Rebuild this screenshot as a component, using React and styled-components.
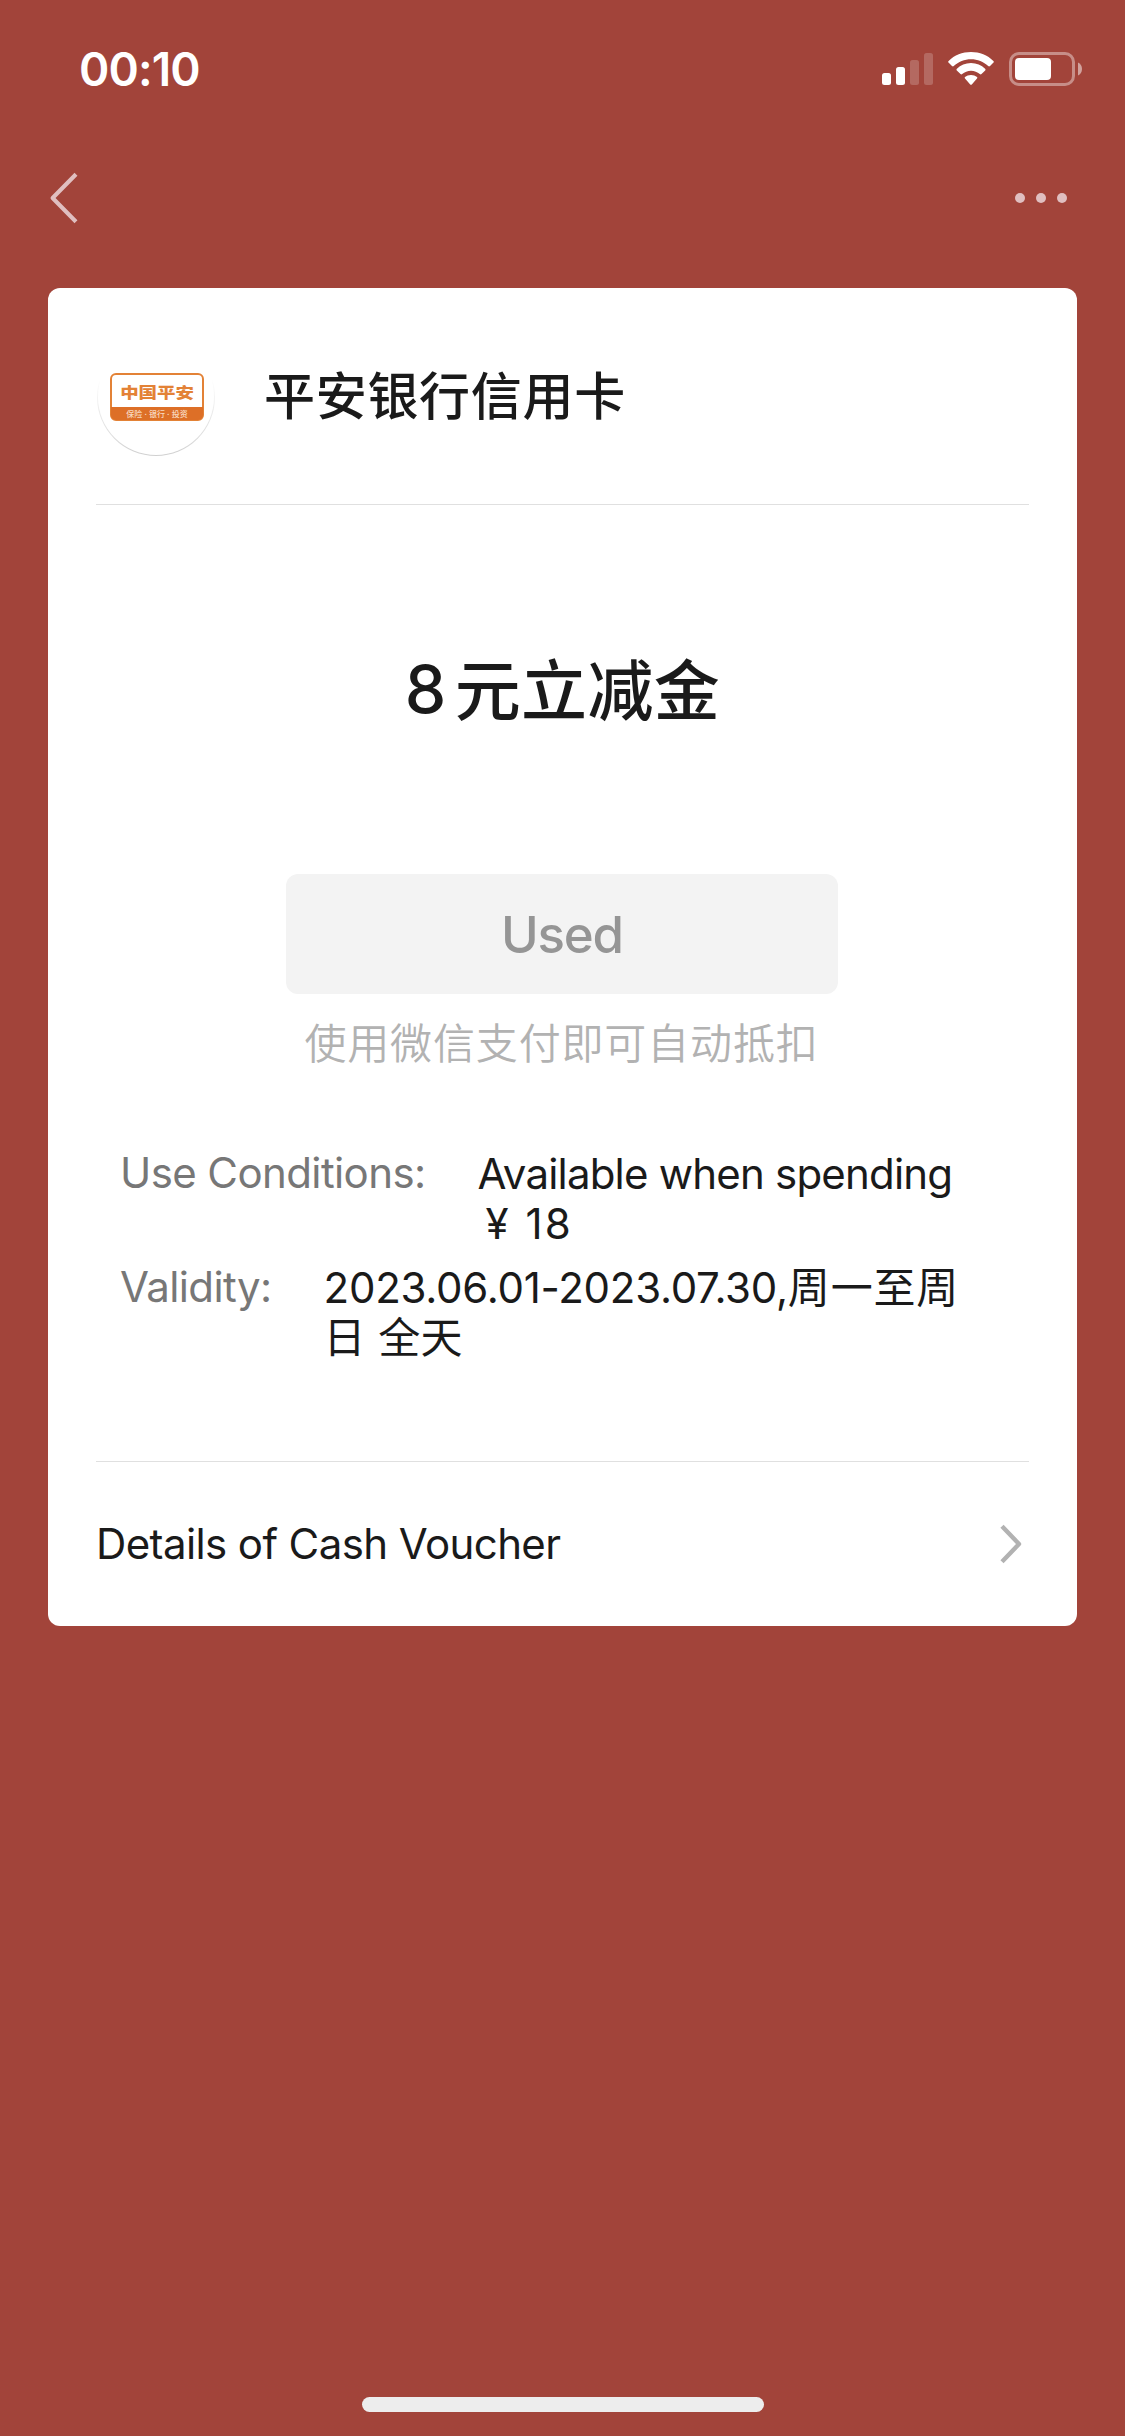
import React from 'react';
import styled, { createGlobalStyle } from 'styled-components';

const GlobalStyle = createGlobalStyle`
  * {
    box-sizing: border-box;
  }

  body {
    margin: 0;
    background-color: #a2443a;
    font-family: Inter, 'Noto Sans CJK SC', sans-serif;
    color: #1a1a1a;
  }
`;

const Page = styled.div`
  width: 1125px;
  height: 2436px;
  display: flex;
  flex-direction: column;
  background-color: #a2443a;
`;

const StatusBar = styled.header`
  height: 138px;
  padding: 0 42px 0 79px;
  display: flex;
  justify-content: space-between;
  align-items: center;
`;

const Time = styled.span`
  color: white;
  font-size: 46px;
  font-weight: 600;
  line-height: 60px;
  letter-spacing: -0.9px;
`;

const StatusIcons = styled.div`
  display: flex;
  align-items: center;
  gap: 15px;
`;

const NavBar = styled.nav`
  height: 120px;
  padding: 0 58px 0 49px;
  display: flex;
  justify-content: space-between;
  align-items: center;
`;

const Dots = styled.div`
  display: flex;
  gap: 11px;
`;

const Dot = styled.span`
  width: 10px;
  height: 10px;
  border-radius: 50%;
  background-color: #e0bfc0;
`;

const Card = styled.main`
  width: 1029px;
  height: 1338px;
  margin: 30px 48px 0;
  padding: 0 48px;
  border-radius: 12px;
  background-color: white;
  display: flex;
  flex-direction: column;
`;

const Merchant = styled.div`
  height: 217px;
  padding-top: 1px;
  border-bottom: 1px solid #e0e0e0;
  display: flex;
  align-items: center;
`;

const Avatar = styled.div`
  width: 118px;
  height: 118px;
  margin: 1px 50px 0 1px;
  border-radius: 50%;
  background: linear-gradient(to bottom, white 35%, #d0d0d0);
  padding: 1px;
`;

const AvatarInner = styled.div`
  width: 100%;
  height: 100%;
  padding: 1px 0 0 1px;
  border-radius: 50%;
  background-color: white;
  display: flex;
  justify-content: center;
  align-items: center;
`;

const MerchantName = styled.h1`
  margin: 2px 0 0 -1px;
  font-size: 51px;
  font-weight: 500;
  line-height: 60px;
  letter-spacing: 0.7px;
`;

const Amount = styled.h2`
  height: 80px;
  margin: 144px 0 0;
  font-size: 66px;
  font-weight: 500;
  line-height: 80px;
  letter-spacing: 0.4px;
  display: flex;
  justify-content: center;
  gap: 8px;
`;

const AmountUnit = styled.span`
  padding-top: 2px;
`;

const UsedButton = styled.button`
  width: 552px;
  height: 120px;
  margin: 145px auto 0 190px;
  padding: 0;
  border: none;
  border-radius: 12px;
  background-color: #f3f3f3;
  color: #959595;
  font-family: inherit;
  font-size: 51px;
  font-weight: 500;
  line-height: 121px;
  letter-spacing: -1.2px;
`;

const Hint = styled.p`
  height: 60px;
  margin: 20px 2px 0 0;
  color: #b2b2b2;
  font-size: 42px;
  font-weight: 350;
  line-height: 60px;
  letter-spacing: 0.85px;
  text-align: center;
`;

const Info = styled.dl`
  margin: 74px 24px 0;
  height: 314px;
`;

const InfoRow = styled.div`
  height: 114px;
  display: flex;
`;

const Label = styled.dt`
  margin-right: 52px;
  color: #777;
  font-size: 42px;
  line-height: 50px;
  letter-spacing: -0.6px;
  white-space: nowrap;
`;

const Value = styled.dd`
  margin: 1px 0 0;
  font-size: 42px;
  line-height: 50px;
  letter-spacing: ${(props) => props.$spacing};
  white-space: pre;
`;

const Price = styled.div`
  padding-left: 8px;
  display: flex;
  gap: 15px;
  letter-spacing: 2px;
`;

const Han = styled.span`
  letter-spacing: ${(props) => props.$spacing};
`;

const DetailsRow = styled.a`
  height: 165px;
  border-top: 1px solid #e0e0e0;
  padding-right: 6px;
  display: flex;
  justify-content: space-between;
  align-items: center;
  font-size: 42px;
  line-height: 50px;
  letter-spacing: -0.6px;
`;

const HomeIndicator = styled.div`
  width: 402px;
  height: 15px;
  margin: auto auto 24px 362px;
  border-radius: 8px;
  background-color: #ededed;
`;

const Signal = () => (
  <svg width="51" height="34" viewBox="0 0 51 34" fill="white">
    <rect x="0" y="21" width="9" height="12" rx="2.5" />
    <rect x="14" y="15" width="9" height="18" rx="2.5" />
    <rect x="28" y="8" width="9" height="25" rx="2.5" opacity="0.2" />
    <rect x="42" y="1" width="9" height="32" rx="2.5" opacity="0.2" />
  </svg>
);

const Wifi = () => (
  <svg width="46" height="34" viewBox="0 0 46 34" fill="white">
    <path d="M23 0C31.6 0 39.6 3.2 45.4 8.9C46 9.5 46 10.1 45.5 10.6L42 14C41.4 14.5 40.8 14.5 40.2 14C35.6 9.6 29.5 7.2 23 7.2S10.4 9.6 5.8 14C5.2 14.5 4.6 14.5 4 14L0.5 10.6C0 10.1 0 9.5 0.6 8.9C6.4 3.2 14.4 0 23 0Z" />
    <path d="M23 11.1C28.5 11.1 33.4 13.2 37.1 16.8C37.7 17.4 37.7 18 37.2 18.5L33.5 22.1C33 22.6 32.4 22.6 31.8 22.1C29.4 20 26.4 18.7 23 18.7S16.6 20 14.2 22.1C13.6 22.6 13 22.6 12.5 22.1L8.8 18.5C8.3 18 8.3 17.4 8.9 16.8C12.6 13.2 17.5 11.1 23 11.1Z" />
    <path d="M23 22.9C25.4 22.9 27.4 23.7 29 25.1C29.5 25.6 29.5 26.1 29 26.6L23.8 32.4C23.3 32.9 22.7 32.9 22.2 32.4L17 26.6C16.5 26.1 16.5 25.6 17 25.1C18.6 23.7 20.6 22.9 23 22.9Z" />
  </svg>
);

const Battery = () => (
  <svg width="74" height="34" viewBox="0 0 74 34">
    <rect x="1.5" y="1.5" width="63" height="31" rx="8.5" fill="none" stroke="white" strokeWidth="3" opacity="0.4" />
    <rect x="6" y="6" width="36" height="22" rx="4" fill="white" />
    <path d="M69 10.5C71.4 11.6 73 14 73 17S71.4 22.4 69 23.5Z" fill="white" opacity="0.5" />
  </svg>
);

const BackIcon = () => (
  <svg width="30" height="52" viewBox="0 0 30 52" fill="none" stroke="#e0bfc0" strokeWidth="4.1" strokeLinejoin="round">
    <path d="M27 2.2L3.6 26L27 49.8" />
  </svg>
);

const ArrowIcon = () => (
  <svg width="24" height="40" viewBox="0 0 24 40" fill="none" stroke="#b2b2b2" strokeWidth="4.4" strokeLinejoin="round">
    <path d="M3 2.2L20 20L3 37.8" />
  </svg>
);

const BankLogo = () => (
  <svg width="94" height="48" viewBox="0 0 94 48">
    <rect x="1" y="1" width="92" height="46" rx="5" fill="white" stroke="#e38236" strokeWidth="2" />
    <path d="M1 34H93V42A5 5 0 0 1 88 47H6A5 5 0 0 1 1 42Z" fill="#dd6f27" />
    <g textAnchor="middle">
      <text transform="translate(47 24.5) scale(1.23 1)" fontSize="15" fontWeight="900" fill="#e38236">
        中国平安
      </text>
      <text x="47" y="43.5" fontSize="8" fontWeight="500" fill="#f8d9c0">
        保险 · 银行 · 投资
      </text>
    </g>
  </svg>
);

const App = () => {
  return (
    <Page>
      <GlobalStyle />
      <StatusBar>
        <Time>00:10</Time>
        <StatusIcons>
          <Signal />
          <Wifi />
          <Battery />
        </StatusIcons>
      </StatusBar>
      <NavBar>
        <BackIcon />
        <Dots>
          <Dot />
          <Dot />
          <Dot />
        </Dots>
      </NavBar>
      <Card>
        <Merchant>
          <Avatar>
            <AvatarInner>
              <BankLogo />
            </AvatarInner>
          </Avatar>
          <MerchantName>平安银行信用卡</MerchantName>
        </Merchant>
        <Amount>
          <span>8</span>
          <AmountUnit>元立减金</AmountUnit>
        </Amount>
        <UsedButton>Used</UsedButton>
        <Hint>使用微信支付即可自动抵扣</Hint>
        <Info>
          <InfoRow>
            <Label>Use Conditions:</Label>
            <Value $spacing="-0.8px">
              Available when spending
              <Price>
                <span>¥</span>
                <span>18</span>
              </Price>
            </Value>
          </InfoRow>
          <InfoRow>
            <Label>Validity:</Label>
            <Value $spacing="-0.25px">
              2023.06.01-2023.07.30,<Han $spacing="0.8px">周一至周</Han>
              <br />
              <Han $spacing="0.4px">日 全天</Han>
            </Value>
          </InfoRow>
        </Info>
        <DetailsRow>
          Details of Cash Voucher
          <ArrowIcon />
        </DetailsRow>
      </Card>
      <HomeIndicator />
    </Page>
  );
};

export default App;
